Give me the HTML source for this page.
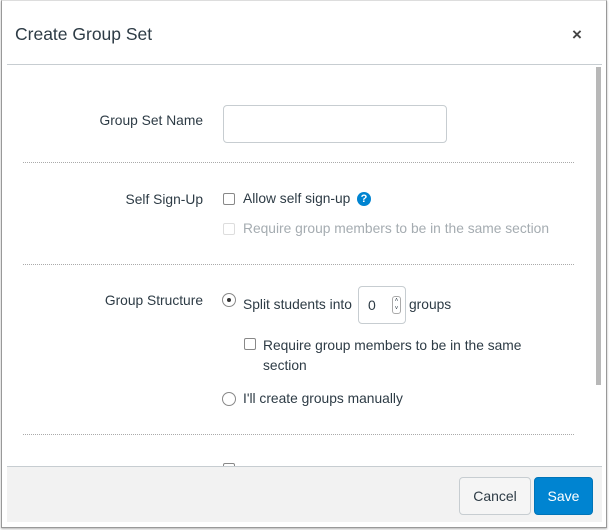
<!DOCTYPE html>
<html><head><style>
*{box-sizing:border-box;margin:0;padding:0}
body{width:609px;height:530px;background:#fff;font-family:"Liberation Sans",sans-serif;color:#2d3b45;position:relative;overflow:hidden}
.frame{position:absolute;left:1px;top:0;width:606px;height:528px;border:1px solid #999;border-top:1px solid #ddd;box-shadow:0 1px 2px rgba(0,0,0,.3)}
.title{position:absolute;left:15px;top:24px;font-size:17.5px;color:#2d3b45}
.x{position:absolute;left:572px;top:25px;font-size:17px;font-weight:bold;color:#444}
.hline{position:absolute;left:7px;width:595px;top:64px;border-top:1px solid #c7cdd1}
.scroll{position:absolute;left:596px;top:67px;width:5px;height:318px;background:#b8b8b8}
.lbl{position:absolute;font-size:13.8px;right:406px;text-align:right;white-space:nowrap}
.t{position:absolute;font-size:13.8px;white-space:nowrap}
.dot{position:absolute;left:23px;width:551px;border-top:1px dotted #aaa}
.cb{position:absolute;width:12px;height:12px;border:1px solid #888;border-radius:2px;background:#fff}
.rd{position:absolute;width:14px;height:14px;border:1px solid #888;border-radius:50%;background:#fff}
.footer{position:absolute;left:7px;top:466px;width:595px;height:56px;background:#f2f2f2;border-top:1px solid #c7cdd1}
.btn{position:absolute;top:477px;height:38px;border-radius:4px;font-size:14px;text-align:center;line-height:36px}
</style></head><body>
<div class="frame"></div>
<div class="title">Create Group Set</div>
<div class="x">×</div>
<div class="hline"></div>
<div class="scroll"></div>

<div class="lbl" style="top:113px">Group Set Name</div>
<div style="position:absolute;left:223px;top:105px;width:224px;height:38px;border:1px solid #c7cdd1;border-radius:4px"></div>
<div class="dot" style="top:162px"></div>

<div class="lbl" style="top:192px">Self Sign-Up</div>
<div class="cb" style="left:223px;top:193px"></div>
<div class="t" style="left:243px;top:191px">Allow self sign-up</div>
<div style="position:absolute;left:357px;top:192px;width:14px;height:14px;border-radius:50%;background:#0084d1;color:#fff;font-size:11px;font-weight:bold;text-align:center;line-height:14px">?</div>
<div class="cb" style="left:223px;top:223px;border-color:#ddd"></div>
<div class="t" style="left:243px;top:221px;color:#a5acb1">Require group members to be in the same section</div>
<div class="dot" style="top:264px"></div>

<div class="lbl" style="top:293px">Group Structure</div>
<div class="rd" style="left:222px;top:293px"><div style="position:absolute;left:4px;top:4px;width:4px;height:4px;border-radius:50%;background:#333"></div></div>
<div class="t" style="left:243px;top:297px">Split students into</div>
<div style="position:absolute;left:358px;top:286px;width:48px;height:38px;border:1px solid #c7cdd1;border-radius:4px"><span style="position:absolute;left:9px;top:10px;font-size:14px">0</span><span style="position:absolute;left:33px;top:9px;width:9px;height:18px;border:1px solid #aaa;border-radius:3px;font-size:6px;line-height:8px;text-align:center">˄<br>˅</span></div>
<div class="t" style="left:409px;top:297px">groups</div>
<div class="cb" style="left:244px;top:338px"></div>
<div class="t" style="left:263px;top:336px;line-height:20px">Require group members to be in the same<br>section</div>
<div class="rd" style="left:222px;top:392px"></div>
<div class="t" style="left:243px;top:391px">I'll create groups manually</div>
<div class="dot" style="top:434px"></div>
<div class="cb" style="left:223px;top:463px"></div>

<div class="footer"></div>
<div class="btn" style="left:459px;width:72px;background:#f5f5f5;border:1px solid #c7cdd1;color:#2d3b45">Cancel</div>
<div class="btn" style="left:534px;width:59px;background:#0084d1;border:1px solid #0074b8;color:#fff">Save</div>
</body></html>
